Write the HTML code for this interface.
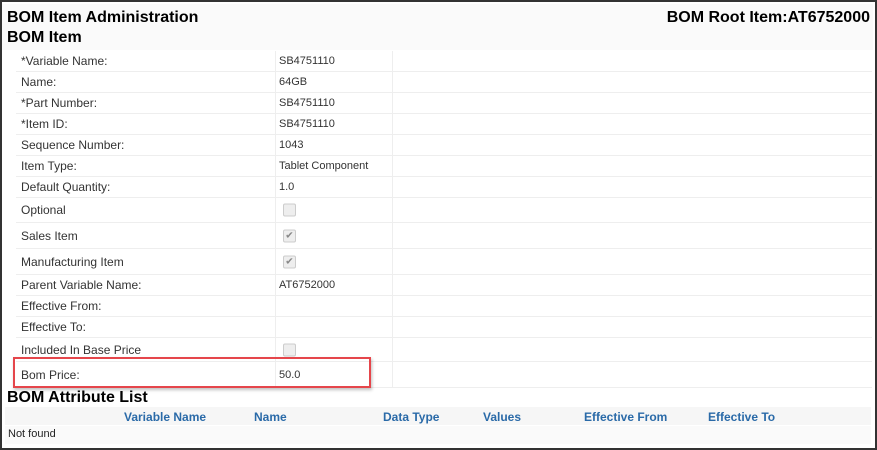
<!DOCTYPE html>
<html><head><style>
body{margin:0;width:877px;height:450px;background:#fff;font-family:"Liberation Sans",Arial,sans-serif;position:relative;overflow:hidden}
.frame{position:absolute;left:0;top:0;width:873px;height:446px;border:2px solid #333}
.a{position:absolute;white-space:nowrap}
h{position:absolute;font-weight:bold;font-size:16px;color:#000}
.row{position:absolute;left:16px;width:856px;border-bottom:1px solid #eee;font-size:12px;color:#333}
.row span{position:absolute;top:50%;transform:translateY(-50%)}
.c1{left:5px}.c2{left:263px;font-size:11px}
.vl{position:absolute;top:51px;height:337px;width:1px;background:#eee}
.cb{position:absolute;left:267px;width:11px;height:11px;border:1px solid #ccc;border-radius:2px;background:#eee;top:50%;transform:translateY(-50%);font-size:10px;color:#888;line-height:11px;text-align:center}
.th{position:absolute;top:410px;font-size:12px;font-weight:bold;color:#2a6aa8}
</style></head><body>
<div class="frame"></div>
<div class="a" style="left:2px;top:4px;width:871px;height:46px;background:#fafafa"></div>
<h style="left:7px;top:9px">BOM Item Administration</h>
<h style="right:7px;top:9px">BOM Root Item:AT6752000</h>
<h style="left:7px;top:29px">BOM Item</h>
<div class="vl" style="left:275px"></div>
<div class="vl" style="left:392px"></div>
<div class="row" style="top:51px;height:20px"><span class="c1">*Variable Name:</span><span class="c2">SB4751110</span></div>
<div class="row" style="top:72px;height:20px"><span class="c1">Name:</span><span class="c2">64GB</span></div>
<div class="row" style="top:93px;height:20px"><span class="c1">*Part Number:</span><span class="c2">SB4751110</span></div>
<div class="row" style="top:114px;height:20px"><span class="c1">*Item ID:</span><span class="c2">SB4751110</span></div>
<div class="row" style="top:135px;height:20px"><span class="c1">Sequence Number:</span><span class="c2">1043</span></div>
<div class="row" style="top:156px;height:20px"><span class="c1">Item Type:</span><span class="c2">Tablet Component</span></div>
<div class="row" style="top:177px;height:20px"><span class="c1">Default Quantity:</span><span class="c2">1.0</span></div>
<div class="row" style="top:198px;height:24px"><span class="c1">Optional</span><div class="cb"></div></div>
<div class="row" style="top:223px;height:25px"><span class="c1">Sales Item</span><div class="cb">✔</div></div>
<div class="row" style="top:249px;height:25px"><span class="c1">Manufacturing Item</span><div class="cb">✔</div></div>
<div class="row" style="top:275px;height:20px"><span class="c1">Parent Variable Name:</span><span class="c2">AT6752000</span></div>
<div class="row" style="top:296px;height:20px"><span class="c1">Effective From:</span></div>
<div class="row" style="top:317px;height:20px"><span class="c1">Effective To:</span></div>
<div class="row" style="top:338px;height:23px"><span class="c1">Included In Base Price</span><div class="cb"></div></div>
<div class="row" style="top:362px;height:25px"><span class="c1">Bom Price:</span><span class="c2">50.0</span></div>
<div class="a" style="left:13px;top:357px;width:354px;height:27px;border:2px solid #e5464b;box-shadow:1px 2px 3px rgba(0,0,0,.25)"></div>
<h style="left:7px;top:389px">BOM Attribute List</h>
<div class="a" style="left:5px;top:407px;width:866px;height:18px;background:#f6f6f6"></div>
<div class="th" style="left:124px">Variable Name</div>
<div class="th" style="left:254px">Name</div>
<div class="th" style="left:383px">Data Type</div>
<div class="th" style="left:483px">Values</div>
<div class="th" style="left:584px">Effective From</div>
<div class="th" style="left:708px">Effective To</div>
<div class="a" style="left:5px;top:426px;width:866px;height:18px;background:#fafafa"></div>
<div class="a" style="left:8px;top:428px;font-size:11px;color:#222">Not found</div>
</body></html>
